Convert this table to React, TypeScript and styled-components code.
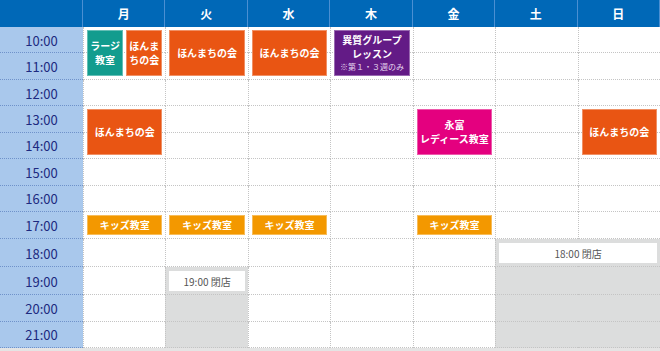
import React from 'react';
import styled, { createGlobalStyle } from 'styled-components';

const GlobalStyle = createGlobalStyle`
  html, body {
    margin: 0;
    padding: 0;
    background: #ffffff;
  }
  body {
    font-family: "Noto Sans CJK JP", "Noto Sans", sans-serif;
  }
`;

// --- Layout ---

const Schedule = styled.div`
  display: grid;
  grid-template-columns: 83px repeat(7, 1fr);
  grid-template-rows: 27px repeat(12, 1fr);
  width: 660px;
  height: 348px;
  border-bottom: 3px solid #e4e4e4;
`;

const HeadCell = styled.div<{ $col: number }>`
  grid-row: 1;
  grid-column: ${({ $col }) => $col};
  background: #0068b7;
  border-right: 1px solid #4a8fd2;
  display: flex;
  align-items: center;
  justify-content: center;
  color: #ffffff;
  font-size: 12px;
  font-weight: bold;
  &:last-of-type {
    border-right: none;
  }
`;

const TimeCell = styled.div<{ $row: number }>`
  grid-row: ${({ $row }) => $row};
  grid-column: 1;
  background: #a9c8ec;
  border-bottom: 1px dotted #6f92ca;
  display: flex;
  align-items: center;
  justify-content: center;
  color: #1d2a80;
  font-size: 13px;
  padding-top: 1px;
`;

const Cell = styled.div<{ $row: number; $col: number; $closed?: boolean; $merge?: boolean }>`
  grid-row: ${({ $row }) => $row};
  grid-column: ${({ $col }) => $col};
  background: ${({ $closed }) => ($closed ? '#dcdddd' : '#ffffff')};
  border-bottom: 1px dotted #c4c4c4;
  border-left: 1px dotted #c4c4c4;
  ${({ $merge }) => $merge && 'border-left: none;'}
`;

// --- Events ---

const Slot = styled.div<{ $row: number; $col: number; $span: number; $colSpan?: number }>`
  grid-row: ${({ $row, $span }) => `${$row} / span ${$span}`};
  grid-column: ${({ $col, $colSpan = 1 }) => `${$col} / span ${$colSpan}`};
  display: flex;
  gap: 3px;
  padding: 3px 3px 4px 4px;
  z-index: 1;
`;

const Event = styled.div<{ $color: string; $short?: boolean }>`
  flex: 1;
  align-self: ${({ $short }) => ($short ? 'flex-start' : 'stretch')};
  height: ${({ $short }) => ($short ? '20px' : 'auto')};
  box-sizing: border-box;
  background: ${({ $color }) => $color};
  border: 1px solid rgba(255, 255, 255, 0.35);
  display: flex;
  flex-direction: column;
  align-items: center;
  justify-content: center;
  color: #ffffff;
  font-size: 10px;
  font-weight: bold;
  line-height: 14px;
  text-align: center;
  white-space: nowrap;
`;

const Note = styled.span`
  font-size: 8px;
  font-weight: normal;
  line-height: 12px;
  color: #e6d6ee;
`;

const ClosedTag = styled.div`
  flex: 1;
  align-self: flex-start;
  height: 20px;
  margin-top: 1px;
  background: #ffffff;
  display: flex;
  align-items: center;
  justify-content: center;
  color: #555555;
  font-size: 10px;
`;

const days = ['月', '火', '水', '木', '金', '土', '日'];
const times = [
  '10:00', '11:00', '12:00', '13:00', '14:00', '15:00',
  '16:00', '17:00', '18:00', '19:00', '20:00', '21:00',
];

const colors = {
  honmachi: '#e95513',
  large: '#129c8e',
  group: '#631b86',
  ladies: '#e4007f',
  kids: '#f39800',
};

type Ev = { day: number; start: number; span: number; color: string; lines: string[]; note?: string; short?: boolean };

const events: Ev[] = [
  { day: 1, start: 0, span: 2, color: colors.honmachi, lines: ['ほんまちの会'] },
  { day: 2, start: 0, span: 2, color: colors.honmachi, lines: ['ほんまちの会'] },
  { day: 3, start: 0, span: 2, color: colors.group, lines: ['異質グループ', 'レッスン'], note: '※第１・３週のみ' },
  { day: 0, start: 3, span: 2, color: colors.honmachi, lines: ['ほんまちの会'] },
  { day: 4, start: 3, span: 2, color: colors.ladies, lines: ['永富', 'レディース教室'] },
  { day: 6, start: 3, span: 2, color: colors.honmachi, lines: ['ほんまちの会'] },
  { day: 0, start: 7, span: 1, color: colors.kids, lines: ['キッズ教室'], short: true },
  { day: 1, start: 7, span: 1, color: colors.kids, lines: ['キッズ教室'], short: true },
  { day: 2, start: 7, span: 1, color: colors.kids, lines: ['キッズ教室'], short: true },
  { day: 4, start: 7, span: 1, color: colors.kids, lines: ['キッズ教室'], short: true },
];

// closed from this time index on (土・日 share one block)
const closedFrom: Record<number, number> = { 1: 9, 5: 8, 6: 8 };

const App: React.FC = () => {
  return (
    <>
      <GlobalStyle />
      <Schedule>
        <HeadCell $col={1} />
        {days.map((d, i) => (
          <HeadCell key={d} $col={i + 2}>{d}</HeadCell>
        ))}

        {times.map((t, r) => (
          <React.Fragment key={t}>
            <TimeCell $row={r + 2}>{t}</TimeCell>
            {days.map((d, c) => {
              const closed = closedFrom[c] !== undefined && r >= closedFrom[c];
              return (
                <Cell
                  key={d}
                  $row={r + 2}
                  $col={c + 2}
                  $closed={closed}
                  $merge={closed && c === 6}
                />
              );
            })}
          </React.Fragment>
        ))}

        {/* 月 10:00 two classes side by side */}
        <Slot $row={2} $col={2} $span={2}>
          <Event $color={colors.large}>
            <span>ラージ</span>
            <span>教室</span>
          </Event>
          <Event $color={colors.honmachi}>
            <span>ほんま</span>
            <span>ちの会</span>
          </Event>
        </Slot>

        {events.map((e, i) => (
          <Slot key={i} $row={e.start + 2} $col={e.day + 2} $span={e.span}>
            <Event $color={e.color} $short={e.short}>
              {e.lines.map((l) => (
                <span key={l}>{l}</span>
              ))}
              {e.note && <Note>{e.note}</Note>}
            </Event>
          </Slot>
        ))}

        <Slot $row={10} $col={7} $span={1} $colSpan={2}>
          <ClosedTag>18:00 閉店</ClosedTag>
        </Slot>
        <Slot $row={11} $col={3} $span={1}>
          <ClosedTag>19:00 閉店</ClosedTag>
        </Slot>
      </Schedule>
    </>
  );
};

export default App;
